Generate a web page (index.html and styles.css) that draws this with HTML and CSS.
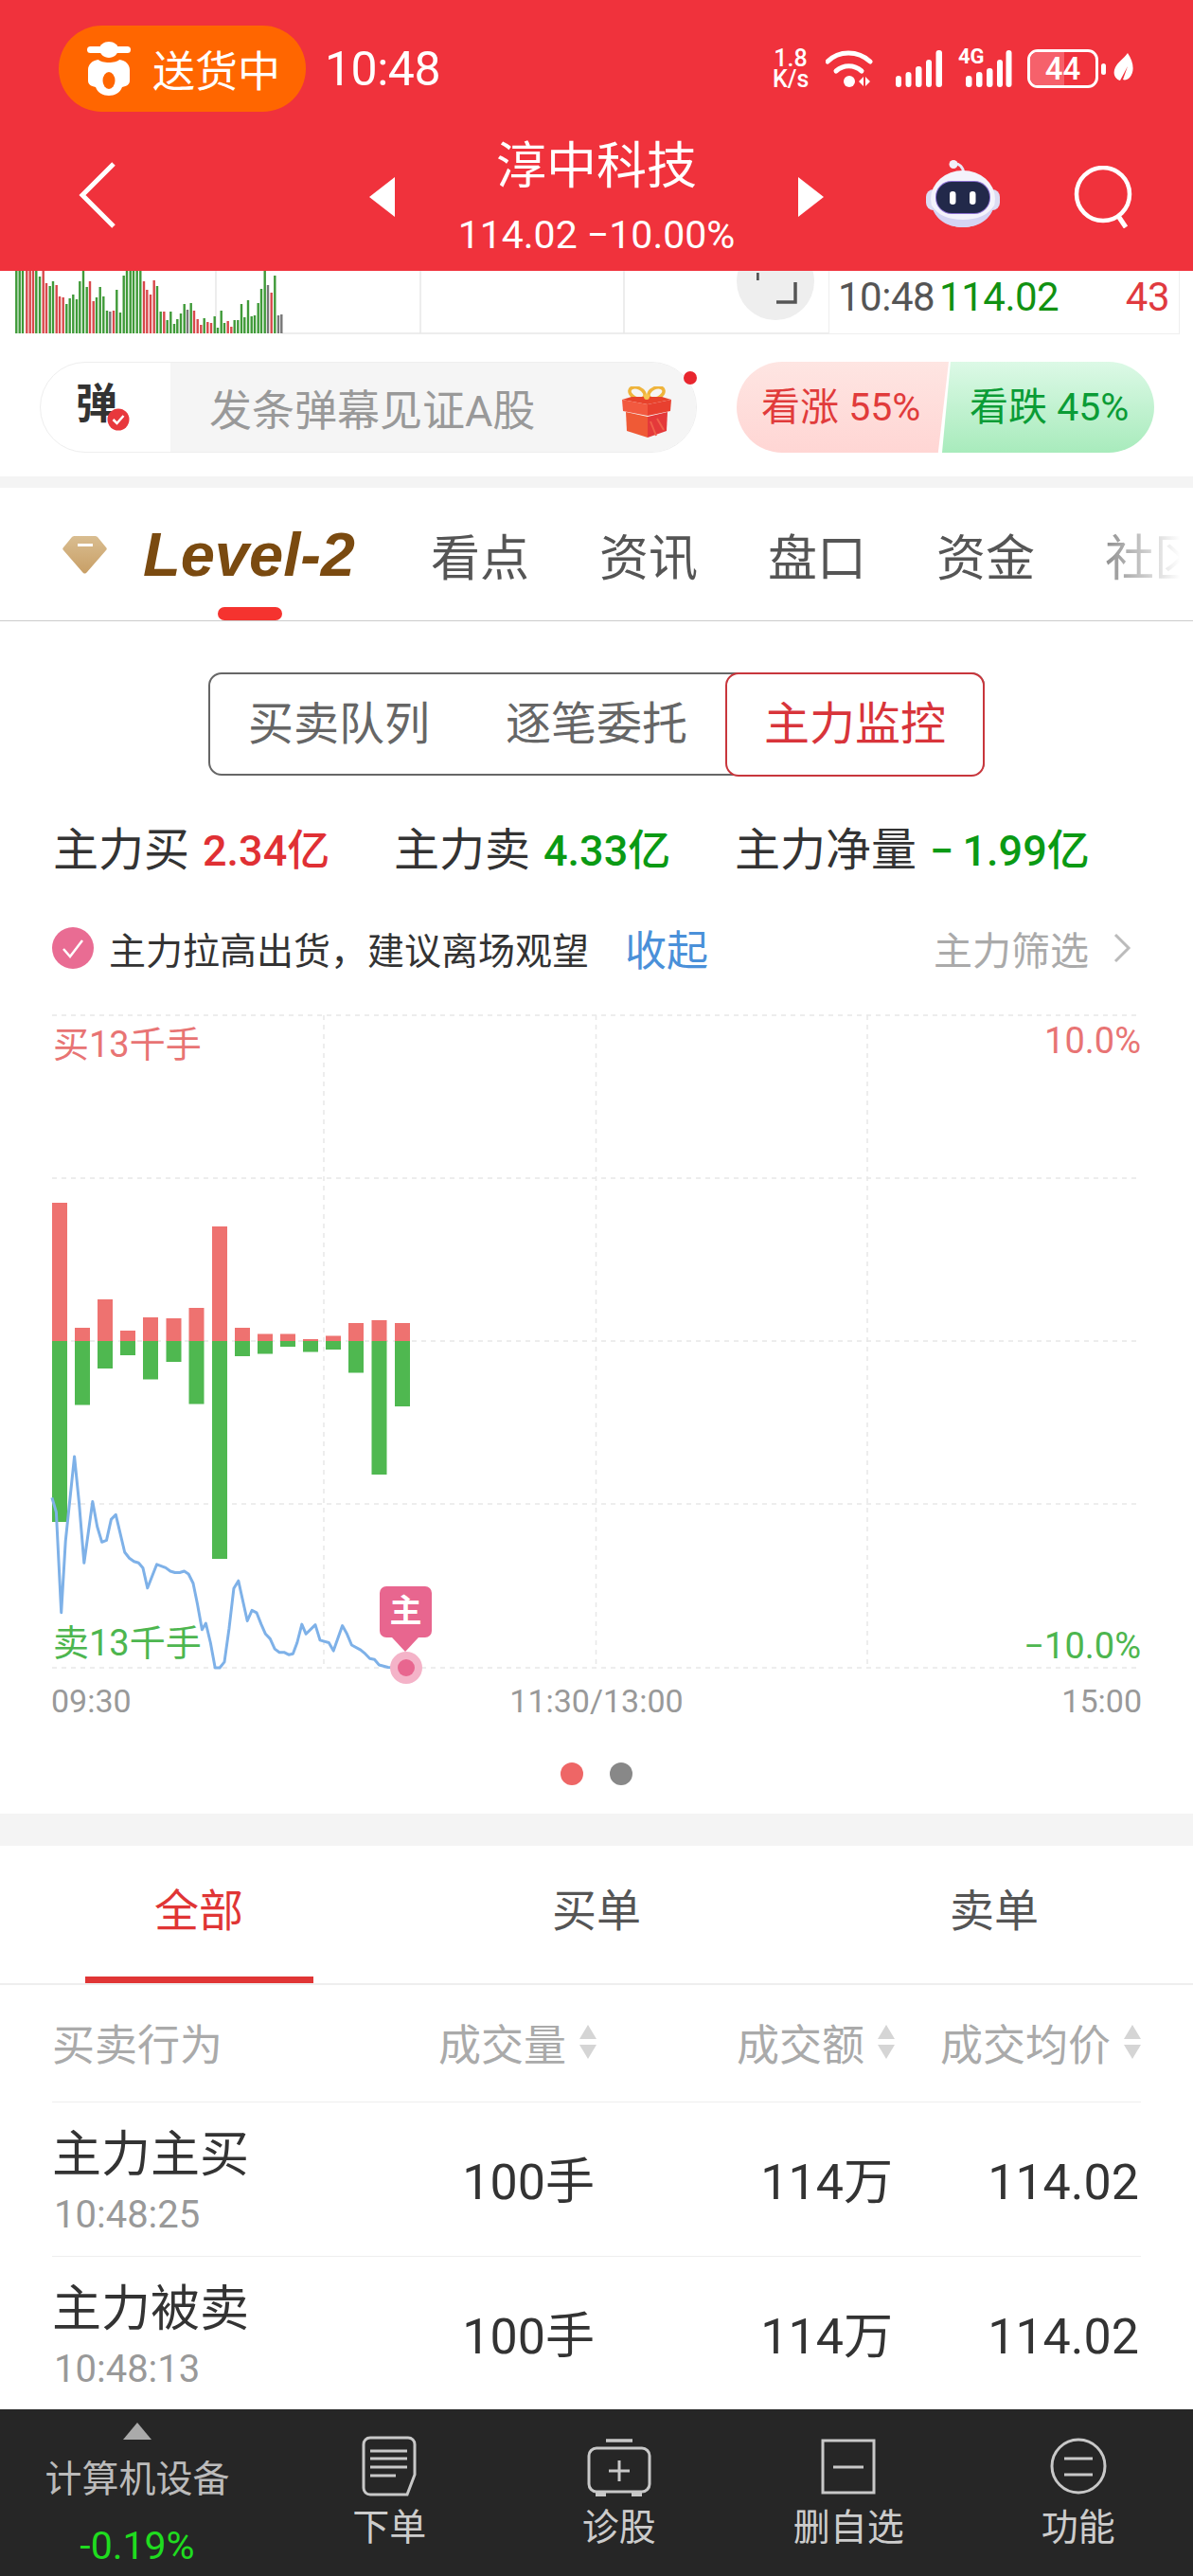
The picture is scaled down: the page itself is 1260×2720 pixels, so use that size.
FILE: index.html
```html
<!DOCTYPE html>
<html lang="zh-CN">
<head>
    <meta charset="UTF-8">
    <meta name="viewport" content="width=device-width, initial-scale=1.0">
    <title>淳中科技</title>
    <link rel="stylesheet" href="styles.css">
</head>
<body>

<div class="app">
    <!-- Red header -->
    <header class="topbar">
        <div class="status-row">
            <div class="delivery-pill">
                <svg class="delivery-icon" viewBox="0 0 46 58">
                    <rect x="0" y="5" width="46" height="7" rx="3.500" fill="#fff"/>
                    <path d="M13 8c0-5 5-8 10-8s10 3 10 8c0 5-5 9-10 9s-10-4-10-9z" fill="#fff"/>
                    <path d="M12 19c3 4 19 4 22 0 7 1 11 5 11 11v11c0 4-3 6-8 7-2 6-8 9-14 9s-12-3-14-9c-5-1-8-3-8-7V30c0-6 4-10 11-11z" fill="#fff"/>
                    <ellipse cx="23" cy="41" rx="6.500" ry="9" fill="#ff6600"/>
                </svg>
                <span>送货中</span>
            </div>
            <span class="clock">10:48</span>
            <div class="status-icons">
                <div class="net-speed"><div>1.8</div><div>K/s</div></div>
                <svg class="wifi-icon" width="50" height="40" viewBox="0 0 50 40">
                    <g fill="none" stroke="#fff" stroke-width="5" stroke-linecap="round">
                        <path d="M2 12C14 0 34 0 47 12"/>
                        <path d="M11 22c8-7 19-7 27 0"/>
                    </g>
                    <circle cx="25" cy="33" r="6" fill="#fff"/>
                    <path d="M35 33l5-5v10zM42 28l5 5-5 5z" fill="#fff"/>
                </svg>
                <svg class="signal-icon" width="50" height="40" viewBox="0 0 50 40">
                    <g fill="#fff">
                        <rect x="0" y="27" width="6" height="12" rx="3"/>
                        <rect x="10.500" y="23" width="6" height="16" rx="3"/>
                        <rect x="21" y="17" width="6.500" height="22" rx="3"/>
                        <rect x="32" y="10" width="6" height="29" rx="3"/>
                        <rect x="42.500" y="0" width="6.500" height="39" rx="3"/>
                    </g>
                </svg>
                <div class="signal-4g">
                    <span>4G</span>
                    <svg width="49" height="40" viewBox="0 0 49 40">
                        <g fill="#fff">
                            <rect x="0" y="27" width="6.500" height="12" rx="3"/>
                            <rect x="11" y="23" width="6.500" height="16" rx="3"/>
                            <rect x="22" y="19" width="6.500" height="20" rx="3"/>
                            <rect x="33" y="10" width="6" height="29" rx="3"/>
                            <rect x="42.500" y="0" width="6" height="39" rx="3"/>
                        </g>
                    </svg>
                </div>
                <div class="battery"><div class="battery-fill"></div><span>44</span></div>
                <div class="battery-nub"></div>
                <svg class="leaf-icon" width="21" height="33" viewBox="0 0 21 33">
                    <path d="M15 0c6 9 8 19 2 26-2 2-5 3-7 2l5-14-8 15C1 27-1 21 2 15 5 9 11 6 15 0z" fill="#fff"/>
                </svg>
            </div>
        </div>

        <div class="title-row">
            <svg class="back-icon" width="40" height="70" viewBox="0 0 40 70">
                <path d="M37 2L4 35l33 33" fill="none" stroke="#fff" stroke-width="5"/>
            </svg>
            <div class="title-block">
                <div class="tri tri-left"></div>
                <div class="title-text">
                    <div class="stock-name">淳中科技</div>
                    <div class="stock-price">114.02 &minus;10.00%</div>
                </div>
                <div class="tri tri-right"></div>
            </div>
            <div class="title-tools">
                <svg class="robot-icon" width="78" height="72" viewBox="0 0 78 72">
                    <path d="M29 4c6-1 10 3 11 10" fill="none" stroke="#e9e8f6" stroke-width="3"/>
                    <circle cx="29" cy="4.500" r="4.500" fill="#f1eff8"/>
                    <rect x="0" y="31" width="78" height="22" rx="8" fill="#dcdcf3"/>
                    <ellipse cx="39" cy="41" rx="34" ry="30" fill="#f4f3fb"/>
                    <path d="M6 48c3 14 16 23 33 23s30-9 33-23c-6 10-18 15-33 15S12 58 6 48z" fill="#d5d4f4"/>
                    <rect x="10" y="22" width="58" height="35" rx="17" fill="#8a6fd0"/>
                    <rect x="11" y="23" width="56" height="33" rx="16" fill="#22294a"/>
                    <rect x="25" y="33" width="6.500" height="14" rx="3.200" fill="#fff"/>
                    <rect x="46" y="33" width="6.500" height="14" rx="3.200" fill="#fff"/>
                </svg>
                <svg class="search-icon" width="64" height="66" viewBox="0 0 64 66">
                    <circle cx="31" cy="30" r="28" fill="none" stroke="#fff" stroke-width="4.500"/>
                    <path d="M47 53l8 12" fill="none" stroke="#fff" stroke-width="5"/>
                </svg>
            </div>
        </div>
    </header>

    <main class="content">
        <!-- Strip of the price chart that scrolled under the header -->
        <section class="mini-chart">
            <svg class="mini-volume" width="875" height="67" viewBox="0 0 875 67">
                <path d="M298 66H875M228 0v66M444 0v66M659 0v66" fill="none" stroke="#e8e8e8" stroke-width="1.500"/>
                <g fill="none" stroke-width="2.400">
                    <path stroke="#3f9a38" d="M17.300 66V0M20.700 66V0M24 66V0M38.300 66V0M42 66V6M52.700 66V16M56 66V11M70.300 66V35M73.700 66V29M77.300 66V25M81 66V30M84.300 66V11M88 66V0M91.700 66V17M102 66V28M105.700 66V17M109.300 66V27M113 66V42M123.300 66V20M127 66V44M130.700 66V5M134 66V0M137.700 66V0M141 66V0M144.700 66V0M148.300 66V0M166 66V16M169.700 66V43M176.700 66V52M180.300 66V43M184 66V56M187.300 66V51M191 66V45M194.700 66V35M201.700 66V34M215.700 66V50M226.700 66V48M230 66V60M233.700 66V42M237 66V55M247.700 66V52M251.300 66V52M255 66V35M258.300 66V49M262 66V31M265.700 66V48M269 66V47M272.700 66V34M276 66V19M279.700 66V0M290.300 66V5"/>
                    <path stroke="#d8484b" d="M28.300 66V0M31.700 66V0M35 66V0M45.700 66V0M49 66V13M59.700 66V15M63 66V27M66.700 66V28M95 66V11M98.700 66V32M120 66V42M152 66V11M155.300 66V20M159 66V25M162.700 66V10M173.300 66V43M205 66V42M208.700 66V51M212.300 66V57M219.300 66V54M223 66V55M240.700 66V53M244.300 66V59M286.700 66V23"/>
                    <path stroke="#777" d="M116.300 66V43M198 66V41M283 66V15M294 66V47M297.300 66V46"/>
                </g>
            </svg>
            <div class="expand-btn">
                <svg width="44" height="36" viewBox="0 0 44 36">
                    <path d="M1 0v8M41 10v21H21" fill="none" stroke="#555" stroke-width="3.500"/>
                </svg>
            </div>
            <div class="tick-box">
                <span class="tick-time">10:48</span>
                <span class="tick-price">114.02</span>
                <span class="tick-vol">43</span>
            </div>
        </section>

        <!-- Danmu input and sentiment -->
        <section class="danmu-row">
            <div class="danmu-pill">
                <div class="danmu-left">
                    <span class="danmu-char">弹</span>
                    <svg class="danmu-badge" width="24" height="24" viewBox="0 0 24 24">
                        <circle cx="12" cy="12" r="11.500" fill="#e8383d"/>
                        <path d="M6.500 12l4 4 7-8" fill="none" stroke="#fff" stroke-width="2.500"/>
                    </svg>
                </div>
                <div class="danmu-input">
                    <span>发条弹幕见证A股</span>
                    <svg class="gift-icon" width="52" height="54" viewBox="0 0 52 54">
                        <g fill="none" stroke="#efb43c" stroke-width="3.500">
                            <ellipse cx="16" cy="7" rx="8.500" ry="5.500" transform="rotate(25 16 7)"/>
                            <ellipse cx="36" cy="7" rx="8.500" ry="5.500" transform="rotate(-25 36 7)"/>
                        </g>
                        <path d="M0 14l10-3h32l10 3-25 5z" fill="#e8432c"/>
                        <path d="M0 14l27 5v12L1 26z" fill="#f2593f"/>
                        <path d="M27 19l25-5-1 12-24 5z" fill="#e8402f"/>
                        <path d="M4 27l23 5v22L5 47z" fill="#ef5a36"/>
                        <path d="M27 32l21-5-1 20-20 7z" fill="#e4393a"/>
                        <path d="M30 37l6 15M37 34l7 12" fill="none" stroke="#f0604a" stroke-width="2"/>
                        <circle cx="26" cy="11" r="3" fill="#f7c350"/>
                    </svg>
                </div>
                <div class="danmu-dot"></div>
            </div>
            <div class="sentiment">
                <div class="sentiment-up">看涨 55%</div>
                <div class="sentiment-down">看跌 45%</div>
            </div>
        </section>

        <div class="section-gap gap-small"></div>

        <!-- Main tabs -->
        <nav class="main-tabs">
            <svg class="gem-icon" width="47" height="41" viewBox="0 0 47 41">
                <defs>
                    <linearGradient id="gemFill" x1="0" y1="0" x2="0" y2="1">
                        <stop offset="0" stop-color="#d9bd90"/>
                        <stop offset="1" stop-color="#c89f66"/>
                    </linearGradient>
                </defs>
                <path d="M13 1h21c1 0 2 0 3 1l9 11c1 1 1 2 0 3L26 39c-2 2-3 2-5 0L1 16c-1-1-1-2 0-3l9-11c1-1 2-1 3-1z" fill="url(#gemFill)"/>
                <rect x="16" y="9" width="16" height="3" fill="#fff"/>
            </svg>
            <span class="level-logo">Level-2</span>
            <span class="main-tab">看点</span>
            <span class="main-tab">资讯</span>
            <span class="main-tab">盘口</span>
            <span class="main-tab">资金</span>
            <span class="main-tab">社区</span>
            <div class="main-tab-indicator"></div>
        </nav>

        <!-- Main force monitor -->
        <section class="monitor">
            <div class="segment">
                <div class="segment-item">买卖队列</div>
                <div class="segment-item">逐笔委托</div>
                <div class="segment-item active">主力监控</div>
            </div>

            <div class="stats">
                <div>主力买<span class="stat-num up">2.34亿</span></div>
                <div>主力卖<span class="stat-num down">4.33亿</span></div>
                <div>主力净量<span class="stat-num down">&minus;&thinsp;1.99亿</span></div>
            </div>

            <div class="notice">
                <svg class="notice-check" width="44" height="44" viewBox="0 0 44 44">
                    <circle cx="22" cy="22" r="22" fill="#e96c93"/>
                    <path d="M12 23l7 8 13-17" fill="none" stroke="#fff" stroke-width="2.500"/>
                </svg>
                <span class="notice-text">主力拉高出货，建议离场观望</span>
                <span class="notice-link">收起</span>
                <span class="notice-filter">主力筛选</span>
                <svg class="notice-arrow" width="20" height="32" viewBox="0 0 20 32">
                    <path d="M3 2l14 14L3 30" fill="none" stroke="#bbb" stroke-width="3"/>
                </svg>
            </div>

            <div class="chart">
                <svg class="chart-svg" width="1260" height="710" viewBox="0 0 1260 710">
                    <!-- grid -->
                    <path d="M55 11H1201M55 183H1201M55 355H1201M55 527H1201M55 700H1201M342 11V700M629.500 11V700M916 11V700" fill="none" stroke="#e8e8e8" stroke-width="1.500" stroke-dasharray="5 5"/>
                    <!-- buy bars -->
                    <g fill="#ee7270">
                        <rect x="55" y="209" width="16" height="146"/>
                        <rect x="79" y="341" width="16" height="14"/>
                        <rect x="103" y="311" width="16" height="44"/>
                        <rect x="127" y="344" width="16" height="11"/>
                        <rect x="151" y="330" width="16" height="25"/>
                        <rect x="175.500" y="331" width="16" height="24"/>
                        <rect x="199.500" y="320" width="16" height="35"/>
                        <rect x="224" y="234" width="16" height="121"/>
                        <rect x="248" y="341" width="16" height="14"/>
                        <rect x="272" y="347.500" width="16" height="7.500"/>
                        <rect x="296" y="347.500" width="16" height="7.500"/>
                        <rect x="320" y="353" width="16" height="2"/>
                        <rect x="344" y="349.500" width="16" height="5.500"/>
                        <rect x="368" y="336" width="16" height="19"/>
                        <rect x="392.500" y="333" width="16" height="22"/>
                        <rect x="417" y="336" width="16" height="19"/>
                    </g>
                    <!-- sell bars -->
                    <g fill="#4fb850">
                        <rect x="55" y="355" width="16" height="191"/>
                        <rect x="79" y="355" width="16" height="67.500"/>
                        <rect x="103" y="355" width="16" height="29"/>
                        <rect x="127" y="355" width="16" height="15"/>
                        <rect x="151" y="355" width="16" height="40.500"/>
                        <rect x="175.500" y="355" width="16" height="22"/>
                        <rect x="199.500" y="355" width="16" height="66.500"/>
                        <rect x="224" y="355" width="16" height="230"/>
                        <rect x="248" y="355" width="16" height="16"/>
                        <rect x="272" y="355" width="16" height="13.500"/>
                        <rect x="296" y="355" width="16" height="6"/>
                        <rect x="320" y="355" width="16" height="11.500"/>
                        <rect x="344" y="355" width="16" height="9"/>
                        <rect x="368" y="355" width="16" height="33.500"/>
                        <rect x="392.500" y="355" width="16" height="141"/>
                        <rect x="417" y="355" width="16" height="69"/>
                    </g>
                    <!-- price line -->
                    <polyline fill="none" stroke="#7eb1e8" stroke-width="3" stroke-linejoin="round"
                        points="54.900,520.400 59.400,535.700 64.700,641.800 69.200,566.300 78.600,477 83.500,525.500 88.800,589.300 97.800,524.500 102.700,551 107.600,567.300 112.500,565.300 117.400,543.400 122.300,538.300 131.700,578 136.600,584.200 141.500,587.800 146.400,589.300 150.900,594.400 155.800,615.800 165.600,590.800 175,594.400 179.900,598 184.800,599.500 189.700,599.500 194.600,598 199.100,601 204,610.700 208.500,632.700 213.400,659.700 217.400,653 222.300,673.500 227.200,700 232.100,700 237,693.900 242,658.200 246.900,616.300 251.800,608.200 261.200,650.500 266.100,639.300 271,641.800 275.900,654.100 280.400,664.300 285.300,669.400 290.200,680.100 295.100,683.700 300,683.700 304.900,686.200 309.400,685.200 313.800,673.500 318.800,654.100 323.200,664.300 333,654.600 338,670.900 347.300,673.500 352.200,682.100 361.600,655.600 366.500,664.300 371.400,676 380.800,681.100 385.700,685.200 390.600,690.300 395.500,691.300 400.400,697 409.800,699.500 417.400,700 428.600,700"/>
                    <circle cx="429" cy="700" r="17" fill="#f4b3c8"/>
                    <circle cx="429" cy="700" r="9" fill="#e8668f"/>
                </svg>
                <span class="chart-label buy-label">买13千手</span>
                <span class="chart-label sell-label">卖13千手</span>
                <span class="chart-label pct-up">10.0%</span>
                <span class="chart-label pct-down">&minus;10.0%</span>
                <div class="main-tag">主</div>
            </div>

            <div class="time-axis">
                <span>09:30</span>
                <span>11:30/13:00</span>
                <span>15:00</span>
            </div>

            <div class="page-dots">
                <span class="page-dot active"></span>
                <span class="page-dot"></span>
            </div>
        </section>

        <div class="section-gap gap-large"></div>

        <!-- Order list -->
        <section class="orders">
            <div class="order-tabs">
                <div class="order-tab active"><span>全部</span></div>
                <div class="order-tab"><span>买单</span></div>
                <div class="order-tab"><span>卖单</span></div>
            </div>

            <div class="order-table">
                <div class="order-head">
                    <div>买卖行为</div>
                    <div class="sort-cell">成交量<i class="sort-arrows"></i></div>
                    <div class="sort-cell">成交额<i class="sort-arrows"></i></div>
                    <div class="sort-cell">成交均价<i class="sort-arrows"></i></div>
                </div>
                <div class="order-row">
                    <div>
                        <div class="order-name">主力主买</div>
                        <div class="order-time">10:48:25</div>
                    </div>
                    <div class="order-val">100手</div>
                    <div class="order-val">114万</div>
                    <div class="order-val">114.02</div>
                </div>
                <div class="order-row">
                    <div>
                        <div class="order-name">主力被卖</div>
                        <div class="order-time">10:48:13</div>
                    </div>
                    <div class="order-val">100手</div>
                    <div class="order-val">114万</div>
                    <div class="order-val">114.02</div>
                </div>
            </div>
        </section>
    </main>

    <!-- Bottom toolbar -->
    <footer class="toolbar">
        <div class="sector">
            <div class="sector-tri"></div>
            <div class="sector-name">计算机设备</div>
            <div class="sector-pct">-0.19%</div>
        </div>
        <div class="tool">
            <svg width="58" height="64" viewBox="0 0 58 64">
                <path d="M9 2h40c4 0 7 3 7 7v32l-8 21H9c-4 0-7-3-7-7V9c0-4 3-7 7-7z" fill="none" stroke="#c8c8c8" stroke-width="3"/>
                <path d="M9 16h39M9 24h39M9 33h39M9 42h27" fill="none" stroke="#c8c8c8" stroke-width="3"/>
            </svg>
            <span>下单</span>
        </div>
        <div class="tool">
            <svg width="68" height="64" viewBox="0 0 68 64">
                <path d="M20 5h28" fill="none" stroke="#c8c8c8" stroke-width="3.500"/>
                <rect x="2" y="13" width="64" height="46" rx="8" fill="none" stroke="#c8c8c8" stroke-width="3"/>
                <path d="M34 26v22M23 37h22" fill="none" stroke="#c8c8c8" stroke-width="3"/>
                <path d="M9 59h11v5H9zM47 59h11v5H47z" fill="#c8c8c8"/>
            </svg>
            <span>诊股</span>
        </div>
        <div class="tool">
            <svg width="58" height="64" viewBox="0 0 58 64">
                <rect x="2" y="5" width="54" height="55" fill="none" stroke="#c8c8c8" stroke-width="3"/>
                <path d="M13 33h32" fill="none" stroke="#c8c8c8" stroke-width="3"/>
            </svg>
            <span>删自选</span>
        </div>
        <div class="tool">
            <svg width="60" height="64" viewBox="0 0 60 64">
                <circle cx="30" cy="32" r="28" fill="none" stroke="#c8c8c8" stroke-width="3"/>
                <path d="M15 24h30M15 41h30" fill="none" stroke="#c8c8c8" stroke-width="3"/>
            </svg>
            <span>功能</span>
        </div>
    </footer>
</div>

</body>
</html>
```

FILE: styles.css
```css
* {
    box-sizing: border-box;
}
body {
    margin: 0;
    background: white;
    font-family: Roboto, "Noto Sans CJK SC", sans-serif;
    color: #333;
}
.app {
    width: 1260px;
    height: 2720px;
    display: flex;
    flex-direction: column;
    overflow: hidden;
}

/* Header */
.topbar {
    flex: none;
    height: 286px;
    background-color: #f0323c;
    color: white;
}
.status-row {
    display: flex;
    align-items: center;
    height: 118px;
    padding: 27px 0 0 62px;
}
.delivery-pill {
    display: flex;
    align-items: center;
    width: 261px;
    height: 91px;
    padding-left: 30px;
    border-radius: 46px;
    background-color: #ff6600;
    font-size: 45px;
}
.delivery-icon {
    width: 46px;
    height: 58px;
    margin-right: 23px;
}
.clock {
    margin-left: 20px;
    font-size: 50px;
    letter-spacing: -0.5px;
}
.status-icons {
    display: flex;
    align-items: center;
    margin-left: auto;
    padding-right: 63px;
}
.net-speed {
    width: 38px;
    margin-right: 18px;
    font-size: 25px;
    font-weight: 500;
    line-height: 22px;
    text-align: center;
}
.wifi-icon {
    margin-right: 24px;
}
.signal-icon {
    margin-right: 16px;
}
.signal-4g {
    position: relative;
    width: 58px;
    padding-left: 8px;
}
.signal-4g svg {
    display: block;
}
.signal-4g span {
    position: absolute;
    left: 0;
    top: -3px;
    font-size: 22px;
    font-weight: 700;
    line-height: 20px;
}
.battery {
    position: relative;
    width: 75px;
    height: 41px;
    margin-left: 15px;
    border: 3px solid white;
    border-radius: 11px;
    overflow: hidden;
    font-size: 33px;
    font-weight: 500;
    line-height: 35px;
    text-align: center;
}
.battery-fill {
    position: absolute;
    left: 0;
    top: 0;
    bottom: 0;
    width: 36px;
    background-color: #f6616b;
}
.battery span {
    position: relative;
}
.battery-nub {
    width: 5px;
    height: 12px;
    margin-left: 3px;
    border-radius: 3px;
    background-color: white;
}
.leaf-icon {
    margin-left: 8px;
}
.title-row {
    display: grid;
    grid-template-columns: 1fr 480px 1fr;
    height: 168px;
}
.back-icon {
    margin: 53px 0 0 83px;
}
.title-block {
    display: flex;
    align-items: flex-start;
    justify-content: space-between;
}
.title-text {
    padding-top: 24px;
    text-align: center;
}
.stock-name {
    font-size: 53px;
    line-height: 68px;
}
.stock-price {
    margin-top: 10px;
    font-size: 41px;
    line-height: 56px;
}
.tri {
    width: 0;
    height: 0;
    margin-top: 69px;
    border-top: 21px solid transparent;
    border-bottom: 21px solid transparent;
}
.tri-left {
    border-right: 27px solid white;
}
.tri-right {
    border-left: 27px solid white;
}
.title-tools {
    display: flex;
    align-items: flex-start;
    justify-content: flex-end;
    padding-right: 62px;
}
.robot-icon {
    margin: 51px 78px 0 0;
}
.search-icon {
    margin-top: 57px;
}

/* Content area */
.content {
    flex: 1;
    min-height: 0;
    overflow: hidden;
}
.mini-chart {
    position: relative;
    display: flex;
    height: 67px;
    overflow: hidden;
}
.mini-volume {
    flex: none;
}
.expand-btn {
    position: absolute;
    left: 778px;
    top: -30px;
    width: 82px;
    height: 82px;
    padding: 32px 0 0 21px;
    border-radius: 50%;
    background-color: #eee;
}
.expand-btn svg {
    display: block;
}
.tick-box {
    display: flex;
    align-items: center;
    width: 371px;
    height: 67px;
    padding: 0 10px 12px 9px;
    border: 1px solid #eee;
    border-top: none;
    font-size: 42px;
    letter-spacing: -0.5px;
}
.tick-time {
    margin-right: 2px;
    color: #555;
}
.tick-price {
    margin-left: 3px;
    color: #119111;
}
.tick-vol {
    margin-left: auto;
    color: #e03a3f;
}

/* Danmu row */
.danmu-row {
    display: flex;
    height: 150px;
    padding: 29px 0 0 42px;
}
.danmu-pill {
    position: relative;
    display: flex;
    width: 694px;
    height: 96px;
    border: 1px solid #eee;
    border-radius: 48px;
}
.danmu-left {
    position: relative;
    flex: none;
    width: 137px;
    padding: 14px 0 0 37px;
    font-size: 44px;
    font-weight: 700;
    line-height: 60px;
}
.danmu-badge {
    position: absolute;
    left: 70px;
    top: 48px;
}
.danmu-input {
    display: flex;
    align-items: center;
    justify-content: space-between;
    flex: 1;
    padding: 0 26px 0 41px;
    border-radius: 0 48px 48px 0;
    background-color: #f5f5f5;
    color: #999;
    font-size: 45px;
}
.gift-icon {
    margin-top: 10px;
}
.danmu-dot {
    position: absolute;
    right: -1px;
    top: 9px;
    width: 14px;
    height: 14px;
    border-radius: 50%;
    background-color: #e8262e;
}
.sentiment {
    display: flex;
    width: 441px;
    height: 96px;
    margin-left: 42px;
    border-radius: 48px;
    overflow: hidden;
    font-size: 41px;
    line-height: 96px;
}
.sentiment-up {
    width: 224px;
    padding-left: 26px;
    background: linear-gradient(#fee5e2, #ffd6d4);
    color: #e13b3b;
    clip-path: polygon(0 0, 100% 0, 95% 100%, 0 100%);
}
.sentiment-down {
    width: 224px;
    margin-left: -7px;
    padding-left: 29px;
    background: linear-gradient(#dcf9e6, #a8ebbc);
    color: #0b9c36;
    clip-path: polygon(4% 0, 100% 0, 100% 100%, 0 100%);
}
.section-gap {
    background-color: #f4f4f4;
}
.gap-small {
    height: 12px;
}
.gap-large {
    height: 34px;
}

/* Main tabs */
.main-tabs {
    position: relative;
    display: flex;
    align-items: center;
    height: 141px;
    padding-left: 66px;
    border-bottom: 1px solid #ccc;
    overflow: hidden;
    white-space: nowrap;
}
.main-tabs::after {
    content: "";
    position: absolute;
    right: 0;
    top: 0;
    bottom: 0;
    width: 92px;
    background: linear-gradient(to right, rgba(255, 255, 255, 0.35), white 85%);
}
.gem-icon {
    flex: none;
    margin-right: 38px;
}
.level-logo {
    flex: none;
    width: 226px;
    margin-right: 78px;
    color: #7a4a10;
    font-family: "Liberation Sans", sans-serif;
    font-size: 65px;
    font-style: italic;
    font-weight: 700;
}
.main-tab {
    flex: none;
    width: 100px;
    margin-right: 78px;
    color: #555;
    font-size: 52px;
}
.main-tab-indicator {
    position: absolute;
    left: 230px;
    bottom: 0;
    width: 68px;
    height: 14px;
    border-radius: 7px;
    background-color: #f5332f;
}

/* Monitor section */
.monitor {
    height: 1259px;
    padding-top: 54px;
}
.segment {
    display: grid;
    grid-template-columns: repeat(3, 1fr);
    width: 820px;
    height: 109px;
    margin-left: 220px;
    border: 2px solid #666;
    border-radius: 14px;
}
.segment-item {
    color: #666;
    font-size: 48px;
    line-height: 106px;
    text-align: center;
}
.segment-item.active {
    margin: -2px -2px -2px 0;
    border: 2px solid #c8363c;
    border-radius: 14px;
    background: white;
    color: #d8343a;
}
.stats {
    display: grid;
    grid-template-columns: repeat(3, 360px);
    margin-top: 49px;
    padding-left: 56px;
    font-size: 48px;
    line-height: 60px;
    white-space: nowrap;
}
.stat-num {
    margin-left: 14px;
    font-size: 45px;
    font-weight: 500;
}
.up {
    color: #e03034;
}
.down {
    color: #0a9a14;
}
.notice {
    display: flex;
    align-items: center;
    height: 60px;
    margin-top: 42px;
    padding: 0 65px 0 55px;
}
.notice-text {
    margin-left: 16px;
    font-size: 39px;
}
.notice-link {
    margin-left: 38px;
    color: #4a90d9;
    font-size: 44px;
}
.notice-filter {
    margin-left: auto;
    color: #aaa;
    font-size: 41px;
}
.notice-arrow {
    margin-left: 25px;
}

/* Chart */
.chart {
    position: relative;
    height: 710px;
    margin-top: 30px;
}
.chart-svg {
    display: block;
    overflow: visible;
}
.chart-label {
    position: absolute;
    font-size: 38px;
    line-height: 44px;
}
.buy-label {
    left: 56px;
    top: 20px;
    color: #e87474;
}
.sell-label {
    left: 56px;
    top: 652px;
    color: #4db64f;
}
.pct-up {
    right: 55px;
    top: 16px;
    color: #e87474;
}
.pct-down {
    right: 55px;
    top: 655px;
    color: #4db64f;
}
.main-tag {
    position: absolute;
    left: 401px;
    top: 614px;
    width: 55px;
    height: 54px;
    border-radius: 7px;
    background-color: #e8668f;
    color: white;
    font-size: 34px;
    font-weight: 700;
    line-height: 52px;
    text-align: center;
}
.main-tag::after {
    content: "";
    position: absolute;
    left: 13px;
    top: 54px;
    border-top: 15px solid #e8668f;
    border-left: 14px solid transparent;
    border-right: 14px solid transparent;
}
.time-axis {
    display: flex;
    justify-content: space-between;
    padding: 0 54px;
    color: #999;
    font-size: 34px;
    line-height: 50px;
}
.page-dots {
    display: flex;
    justify-content: center;
    gap: 28px;
    margin-top: 40px;
}
.page-dot {
    width: 24px;
    height: 24px;
    border-radius: 50%;
    background-color: #888;
}
.page-dot.active {
    background-color: #ee6666;
}

/* Orders */
.order-tabs {
    display: grid;
    grid-template-columns: repeat(3, 1fr);
    height: 147px;
    border-bottom: 2px solid #eee;
}
.order-tab {
    display: flex;
    justify-content: center;
    color: #555;
    font-size: 47px;
}
.order-tab span {
    width: 241px;
    height: 100%;
    padding-top: 39px;
    line-height: 60px;
    text-align: center;
}
.order-tab.active {
    color: #e03535;
}
.order-tab.active span {
    border-bottom: 7px solid #e03535;
}
.order-table {
    padding: 0 55px;
}
.order-head, .order-row {
    display: grid;
    grid-template-columns: 345px 230px 315px 260px;
    border-bottom: 1px solid #eee;
}
.order-head {
    align-items: center;
    height: 124px;
    padding-bottom: 3px;
    color: #aaa;
    font-size: 45px;
}
.sort-cell {
    display: flex;
    align-items: center;
    justify-content: flex-end;
}
.sort-arrows {
    position: relative;
    width: 18px;
    height: 36px;
    margin-left: 14px;
}
.sort-arrows::before, .sort-arrows::after {
    content: "";
    position: absolute;
    left: 0;
    border-left: 9px solid transparent;
    border-right: 9px solid transparent;
}
.sort-arrows::before {
    top: 0;
    border-bottom: 15px solid #d5d5d5;
}
.sort-arrows::after {
    bottom: 0;
    border-top: 15px solid #d5d5d5;
}
.order-row {
    align-items: center;
    height: 163px;
    padding-top: 8px;
}
.order-row + .order-row {
    border-bottom: none;
    padding-top: 7px;
}
.order-name {
    font-size: 52px;
    line-height: 60px;
}
.order-time {
    margin: 8px 0 0 2px;
    color: #999;
    font-size: 40px;
    line-height: 50px;
}
.order-val {
    padding-right: 2px;
    font-size: 52px;
    line-height: 60px;
    text-align: right;
    white-space: nowrap;
}

/* Toolbar */
.toolbar {
    flex: none;
    display: grid;
    grid-template-columns: 290px repeat(4, 1fr);
    height: 176px;
    background-color: #262626;
    color: #ccc;
}
.sector {
    display: flex;
    flex-direction: column;
    align-items: center;
    padding-top: 14px;
}
.sector-tri {
    border-bottom: 18px solid #aaa;
    border-left: 15px solid transparent;
    border-right: 15px solid transparent;
}
.sector-name {
    margin-top: 17px;
    color: #bbb;
    font-size: 39px;
    line-height: 50px;
}
.sector-pct {
    margin-top: 20px;
    color: #1fdc1f;
    font-size: 41px;
    line-height: 50px;
}
.tool {
    display: flex;
    flex-direction: column;
    align-items: center;
    padding-top: 28px;
    font-size: 39px;
    line-height: 50px;
}
.tool svg {
    display: block;
    margin-bottom: 8px;
}
```
